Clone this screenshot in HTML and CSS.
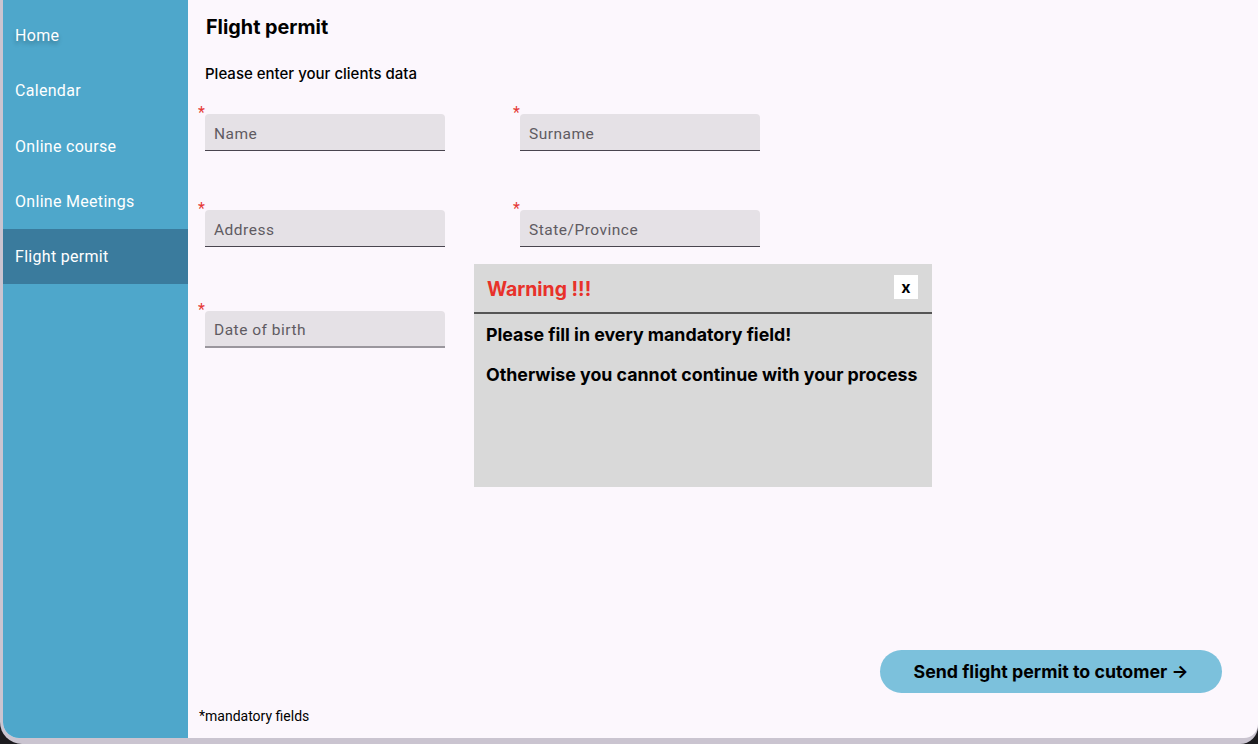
FILE: index.html
```html
<!DOCTYPE html>
<html lang="en">
<head>
<meta charset="utf-8">
<title>Flight permit</title>
<link rel="stylesheet" href="styles.css">
</head>
<body>
<div class="frame">
  <div class="app">
    <nav class="sidebar">
      <a class="nav-item shadowed">Home</a>
      <a class="nav-item">Calendar</a>
      <a class="nav-item">Online course</a>
      <a class="nav-item">Online Meetings</a>
      <a class="nav-item active">Flight permit</a>
    </nav>
    <main class="content">
      <h1 class="title">Flight permit</h1>
      <p class="subtitle">Please enter your clients data</p>
      <div class="form">
        <div class="row">
          <div class="field"><span class="req">*</span><div class="input">Name</div></div>
          <div class="field"><span class="req">*</span><div class="input">Surname</div></div>
        </div>
        <div class="row">
          <div class="field"><span class="req">*</span><div class="input">Address</div></div>
          <div class="field"><span class="req">*</span><div class="input">State/Province</div></div>
        </div>
        <div class="row row-last">
          <div class="field"><span class="req">*</span><div class="input">Date of birth</div></div>
        </div>
      </div>
      <div class="spacer"></div>
      <div class="actions">
        <button class="send">Send flight permit to cutomer →</button>
      </div>
      <p class="note">*mandatory fields</p>

      <div class="dialog">
        <div class="dialog-head">
          <span class="warn">Warning !!!</span>
          <span class="close">x</span>
        </div>
        <div class="dialog-body">
          <p>Please fill in every mandatory field!</p>
          <p>Otherwise you cannot continue with your process</p>
        </div>
      </div>
    </main>
  </div>
</div>
</body>
</html>
```

FILE: styles.css
```css
* { box-sizing: border-box; }
html, body { margin: 0; padding: 0; }
body {
  width: 1258px;
  height: 744px;
  background: #1c1b1f;
  overflow: hidden;
}
.frame {
  width: 1258px;
  height: 744px;
  background: #cac4d0;
  padding: 0 0 6px 3px;
  border-radius: 0 0 18px 22px;
}
.app {
  display: flex;
  height: 738px;
  background: #fcf7fd;
  border-radius: 0 0 14px 16px;
  overflow: hidden;
}
.sidebar {
  width: 185px;
  flex: none;
  background: #4ea7cb;
  padding-top: 8px;
  display: flex;
  flex-direction: column;
  font-family: Roboto, "Noto Sans", sans-serif;
}
.nav-item {
  height: 55.3px;
  display: flex;
  align-items: center;
  padding-left: 12px;
  color: #ffffff;
  font-size: 16px;
  letter-spacing: 0.3px;
}
.nav-item.shadowed { text-shadow: 0 3px 4px rgba(0,0,0,0.3); }
.nav-item.active { background: #3a7b9d; }
.content {
  position: relative;
  flex: 1;
  display: flex;
  flex-direction: column;
  padding: 15px 0 0 11px;
  font-family: Inter, "Open Sans", sans-serif;
  color: #000;
}
.title {
  margin: 0 0 0 7px;
  font-size: 19.8px;
  font-weight: 700;
  line-height: 25px;
}
.subtitle {
  margin: 24px 0 0 6px;
  font-size: 15px;
  font-weight: 500;
  line-height: 20px;
}
.form {
  margin-top: 30px;
  display: flex;
  flex-direction: column;
  gap: 59px;
}
.row { display: flex; gap: 69px; }
.row-last { margin-top: 5px; }
.field {
  position: relative;
  width: 246px;
  padding-left: 6px;
}
.req {
  position: absolute;
  left: -1px;
  top: -9px;
  color: #e53935;
  font-family: Roboto, sans-serif;
  font-size: 16px;
  line-height: 16px;
}
.input {
  width: 240px;
  height: 37px;
  background: #e5e1e6;
  border-radius: 4px 4px 0 0;
  border-bottom: 1px solid #49454f;
  display: flex;
  align-items: center;
  padding: 3px 0 0 9px;
  font-family: Roboto, sans-serif;
  font-size: 15.5px;
  letter-spacing: 0.5px;
  color: #5f5b62;
}
.row-last .input { border-bottom: 2px solid #9a969d; padding-top: 2px; }
.spacer { flex: 1; }
.actions {
  display: flex;
  justify-content: flex-end;
  padding-right: 36px;
}
.send {
  width: 342px;
  height: 43px;
  border: none;
  border-radius: 22px;
  background: #7cc1dc;
  font-family: Inter, sans-serif;
  font-weight: 700;
  font-size: 17.8px;
  color: #000;
  padding: 0;
}
.note {
  margin: 15px 0 14px 0;
  font-family: Roboto, sans-serif;
  font-size: 14px;
  line-height: 16px;
  font-weight: 400;
}
.dialog {
  position: absolute;
  left: 286px;
  top: 264px;
  width: 458px;
  height: 223px;
  background: #d9d9d9;
}
.dialog-head {
  height: 50px;
  display: flex;
  align-items: center;
  justify-content: space-between;
  padding: 0 14px 0 13px;
  border-bottom: 2px solid #555;
}
.warn {
  color: #e8312a;
  font-size: 19.4px;
  font-weight: 700;
  margin-top: 1px;
}
.close {
  width: 24px;
  height: 24px;
  background: #fff;
  display: flex;
  align-items: center;
  justify-content: center;
  font-weight: 700;
  font-size: 16px;
  margin-top: -2px;
}
.dialog-body { padding: 10px 0 0 12px; }
.dialog-body p {
  margin: 0 0 19px;
  font-size: 17.8px;
  font-weight: 700;
  line-height: 21px;
}
```
